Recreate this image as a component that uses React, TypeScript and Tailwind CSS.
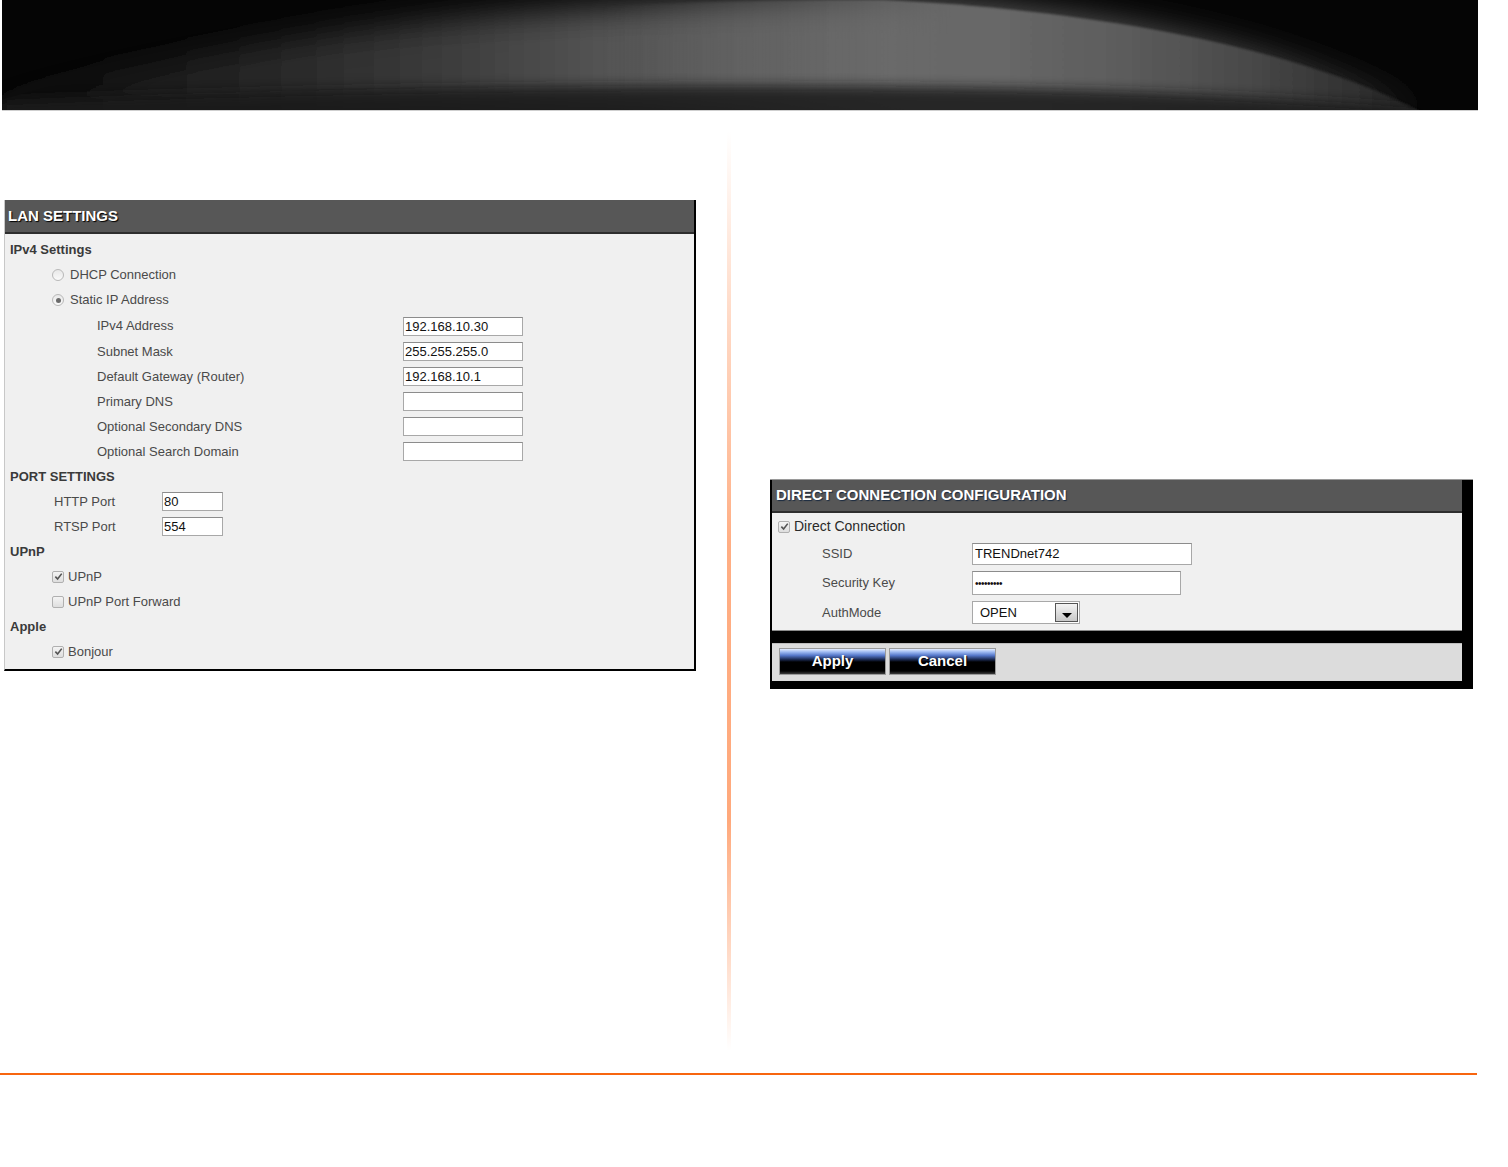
import React from "react";

const font = "font-['Liberation_Sans',Arial,sans-serif]";

const arcPath =
  "M-40 112 C 150 50, 450 -2, 880 0 C 1100 10, 1300 50, 1420 112 Z";

const HeaderArt = () => (
  <svg
    viewBox="0 0 1476 110"
    preserveAspectRatio="none"
    className="block h-full w-full">
    <defs>
      <linearGradient id="glow" x1="0" y1="0" x2="1476" y2="0" gradientUnits="userSpaceOnUse">
        <stop offset="0" stopColor="#141414" />
        <stop offset="0.1" stopColor="#1c1c1c" />
        <stop offset="0.2" stopColor="#2a2a2a" />
        <stop offset="0.3" stopColor="#3c3c3c" />
        <stop offset="0.4" stopColor="#525252" />
        <stop offset="0.5" stopColor="#626262" />
        <stop offset="0.6" stopColor="#6a6a6a" />
        <stop offset="0.68" stopColor="#676767" />
        <stop offset="0.76" stopColor="#5c5c5c" />
        <stop offset="0.84" stopColor="#4a4a4a" />
        <stop offset="0.9" stopColor="#363636" />
        <stop offset="0.96" stopColor="#222222" />
      </linearGradient>
      <linearGradient id="blend" x1="600" y1="0" x2="950" y2="0" gradientUnits="userSpaceOnUse">
        <stop offset="0" stopColor="#fff" stopOpacity="0" />
        <stop offset="1" stopColor="#fff" stopOpacity="1" />
      </linearGradient>
      <mask id="sharpMask" maskUnits="userSpaceOnUse" x="0" y="0" width="1476" height="110">
        <rect width="1476" height="110" fill="url(#blend)" />
      </mask>
      <filter id="wide" x="-10%" y="-60%" width="120%" height="220%">
        <feGaussianBlur stdDeviation="16" />
      </filter>
      <filter id="soft" x="-5%" y="-10%" width="110%" height="120%">
        <feGaussianBlur stdDeviation="1.2" />
      </filter>
      <filter id="band" x="-5%" y="-50%" width="110%" height="200%">
        <feGaussianBlur stdDeviation="6" />
      </filter>
      <clipPath id="arc">
        <path d={arcPath} />
      </clipPath>
    </defs>
    <rect width="1476" height="110" fill="#050505" />
    <path d={arcPath} fill="url(#glow)" filter="url(#wide)" />
    <path d={arcPath} fill="url(#glow)" filter="url(#soft)" mask="url(#sharpMask)" />
    <g clipPath="url(#arc)">
      <path
        d="M0 124 L0 100 C 300 88, 700 82, 1000 88 C 1200 92, 1350 102, 1476 114 L1476 124 Z"
        fill="#1e1e1e"
        opacity="0.85"
        filter="url(#band)"
      />
    </g>
  </svg>
);

const Radio = ({ checked }: { checked?: boolean }) => (
  <span className="flex h-[12px] w-[12px] items-center justify-center rounded-full border border-[#b8b8b8] bg-[linear-gradient(to_bottom,#e8e8e8,#fafafa)]">
    {checked && <span className="h-[5px] w-[5px] rounded-full bg-[#6a6a6a]" />}
  </span>
);

const Check = ({ checked }: { checked?: boolean }) => (
  <span className="flex h-[12px] w-[12px] items-center justify-center rounded-[2px] border border-[#b0b0b0] bg-[linear-gradient(to_bottom,#f4f4f4,#dedede)]">
    {checked && (
      <svg viewBox="0 0 10 10" className="h-[9px] w-[9px]">
        <path d="M1.5 5.2 L4 7.8 L8.6 1.8" fill="none" stroke="#555" strokeWidth="1.8" />
      </svg>
    )}
  </span>
);

const TextBox = ({ value, className }: { value?: string; className: string }) => (
  <div
    className={`flex items-center border border-[#a8a8a8] border-t-[#8c8c8c] bg-white pl-[1px] text-[13px] leading-none text-[#111] ${className}`}>
    {value}
  </div>
);

const Heading = ({ children }: { children: React.ReactNode }) => (
  <div className="flex h-[25px] items-center pl-[5px] text-[13px] font-bold text-[#3a3a3a]">
    {children}
  </div>
);

const ipRows = [
  { label: "IPv4 Address", value: "192.168.10.30" },
  { label: "Subnet Mask", value: "255.255.255.0" },
  { label: "Default Gateway (Router)", value: "192.168.10.1" },
  { label: "Primary DNS", value: "" },
  { label: "Optional Secondary DNS", value: "" },
  { label: "Optional Search Domain", value: "" },
];

const LanSettings = () => (
  <div className="w-[692px] border-l border-r-2 border-b-2 border-l-[#c8c8c8] border-r-black border-b-black bg-[#f0f0f0]">
    <div className="flex h-[34px] items-center border-b-2 border-[#2e2e2e] bg-[#575757] pl-[3px] text-[15px] font-bold text-white [text-shadow:1px_1px_1px_#000]">
      LAN SETTINGS
    </div>
    <div className="pt-[3px] pb-[5px] text-[13px] text-[#4a4a4a]">
      <Heading>IPv4 Settings</Heading>
      <div className="flex h-[25px] items-center gap-[6px] pl-[47px]">
        <Radio />
        <span>DHCP Connection</span>
      </div>
      <div className="flex h-[26px] items-center gap-[6px] pl-[47px]">
        <Radio checked />
        <span>Static IP Address</span>
      </div>
      {ipRows.map((r, i) => (
        <div
          key={r.label}
          className={`flex items-center pl-[92px] ${i === 0 ? "h-[26px]" : "h-[25px]"}`}>
          <span className="w-[306px]">{r.label}</span>
          <TextBox value={r.value} className="h-[19px] w-[120px]" />
        </div>
      ))}
      <Heading>PORT SETTINGS</Heading>
      <div className="flex h-[25px] items-center pl-[49px]">
        <span className="w-[108px]">HTTP Port</span>
        <TextBox value="80" className="h-[19px] w-[61px]" />
      </div>
      <div className="flex h-[25px] items-center pl-[49px]">
        <span className="w-[108px]">RTSP Port</span>
        <TextBox value="554" className="h-[19px] w-[61px]" />
      </div>
      <Heading>UPnP</Heading>
      <div className="flex h-[25px] items-center gap-[4px] pl-[47px]">
        <Check checked />
        <span>UPnP</span>
      </div>
      <div className="flex h-[25px] items-center gap-[4px] pl-[47px]">
        <Check />
        <span>UPnP Port Forward</span>
      </div>
      <Heading>Apple</Heading>
      <div className="flex h-[25px] items-center gap-[4px] pl-[47px]">
        <Check checked />
        <span>Bonjour</span>
      </div>
    </div>
  </div>
);

const BlueButton = ({ label }: { label: string }) => (
  <button
    type="button"
    className="flex h-[27px] w-[107px] items-center justify-center border border-[#9a9a9a] bg-[linear-gradient(to_bottom,#e4edff_0%,#9db9f2_12%,#5577c8_26%,#1b2a52_42%,#000_52%,#000_88%,#3c3c3c_100%)] text-[15px] font-bold text-white [text-shadow:1px_1px_1px_#000]">
    {label}
  </button>
);

const DirectConnection = () => (
  <div className="w-[703px] border-t border-[#9a9a9a] bg-black pl-[2px] pr-[11px] pb-[8px]">
    <div className="flex h-[33px] items-center border-b-2 border-[#2e2e2e] bg-[#575757] pl-[4px] text-[15px] font-bold text-white [text-shadow:1px_1px_1px_#1a2a40]">
      DIRECT CONNECTION CONFIGURATION
    </div>
    <div className="h-[118px] border-b border-[#8a8a8a] bg-[#f0f0f0] pt-[1px] text-[13px] text-[#4a4a4a]">
      <div className="flex h-[25px] items-center gap-[4px] pl-[6px]">
        <Check checked />
        <span className="text-[14px] text-[#2a2a2a]">Direct Connection</span>
      </div>
      <div className="flex h-[29px] items-center pl-[50px]">
        <span className="w-[150px]">SSID</span>
        <TextBox value="TRENDnet742" className="h-[22px] w-[220px] pl-[2px]" />
      </div>
      <div className="flex h-[30px] items-center pl-[50px]">
        <span className="w-[150px]">Security Key</span>
        <TextBox className="h-[24px] w-[209px]" />
      </div>
      <div className="flex h-[29px] items-center pl-[50px]">
        <span className="w-[150px]">AuthMode</span>
        <div className="flex h-[23px] w-[108px] items-center justify-between border border-[#a8a8a8] bg-white pl-[7px] pr-[1px] text-[13px] text-[#111]">
          <span>OPEN</span>
          <span className="flex h-[19px] w-[23px] items-end justify-center border border-[#555] bg-[linear-gradient(to_bottom,#f4f4f4,#c8c8c8)] pb-[3px]">
            <span className="h-0 w-0 border-x-[5px] border-t-[5px] border-x-transparent border-t-black" />
          </span>
        </div>
      </div>
    </div>
    <div className="mt-[12px] flex h-[38px] items-start gap-[3px] border-t border-[#bdbdbd] bg-[#dcdcdc] pt-[4px] pl-[7px]">
      <BlueButton label="Apply" />
      <BlueButton label="Cancel" />
    </div>
  </div>
);

const SecureSettingsApp = () => {
  // the small dots of the key field are drawn as text
  return (
    <div className={`relative h-[1167px] w-[1508px] overflow-hidden bg-white ${font}`}>
      <div className="ml-[2px] h-[111px] w-[1476px] border-b border-[#cfcfcf]">
        <HeaderArt />
      </div>

      <div className="flex h-[962px]">
        <div className="w-[727px] pt-[89px] pl-[4px]">
          <LanSettings />
        </div>
        <div className="mt-[20px] h-[920px] w-[4px] bg-[linear-gradient(to_bottom,rgba(255,140,80,0)_0%,rgba(255,150,95,0.35)_20%,rgba(255,140,80,0.7)_45%,rgba(255,140,80,0.75)_75%,rgba(255,140,80,0)_100%)]" />
        <div className="pt-[368px] pl-[39px]">
          <DirectConnection />
        </div>
      </div>

      <div className="h-[2px] w-[1477px] bg-[#f7650f]" />

      <span className="absolute left-[975px] top-[579px] text-[10px] leading-none tracking-[-0.5px] text-[#111]">
        •••••••••
      </span>
    </div>
  );
};

export default SecureSettingsApp;
